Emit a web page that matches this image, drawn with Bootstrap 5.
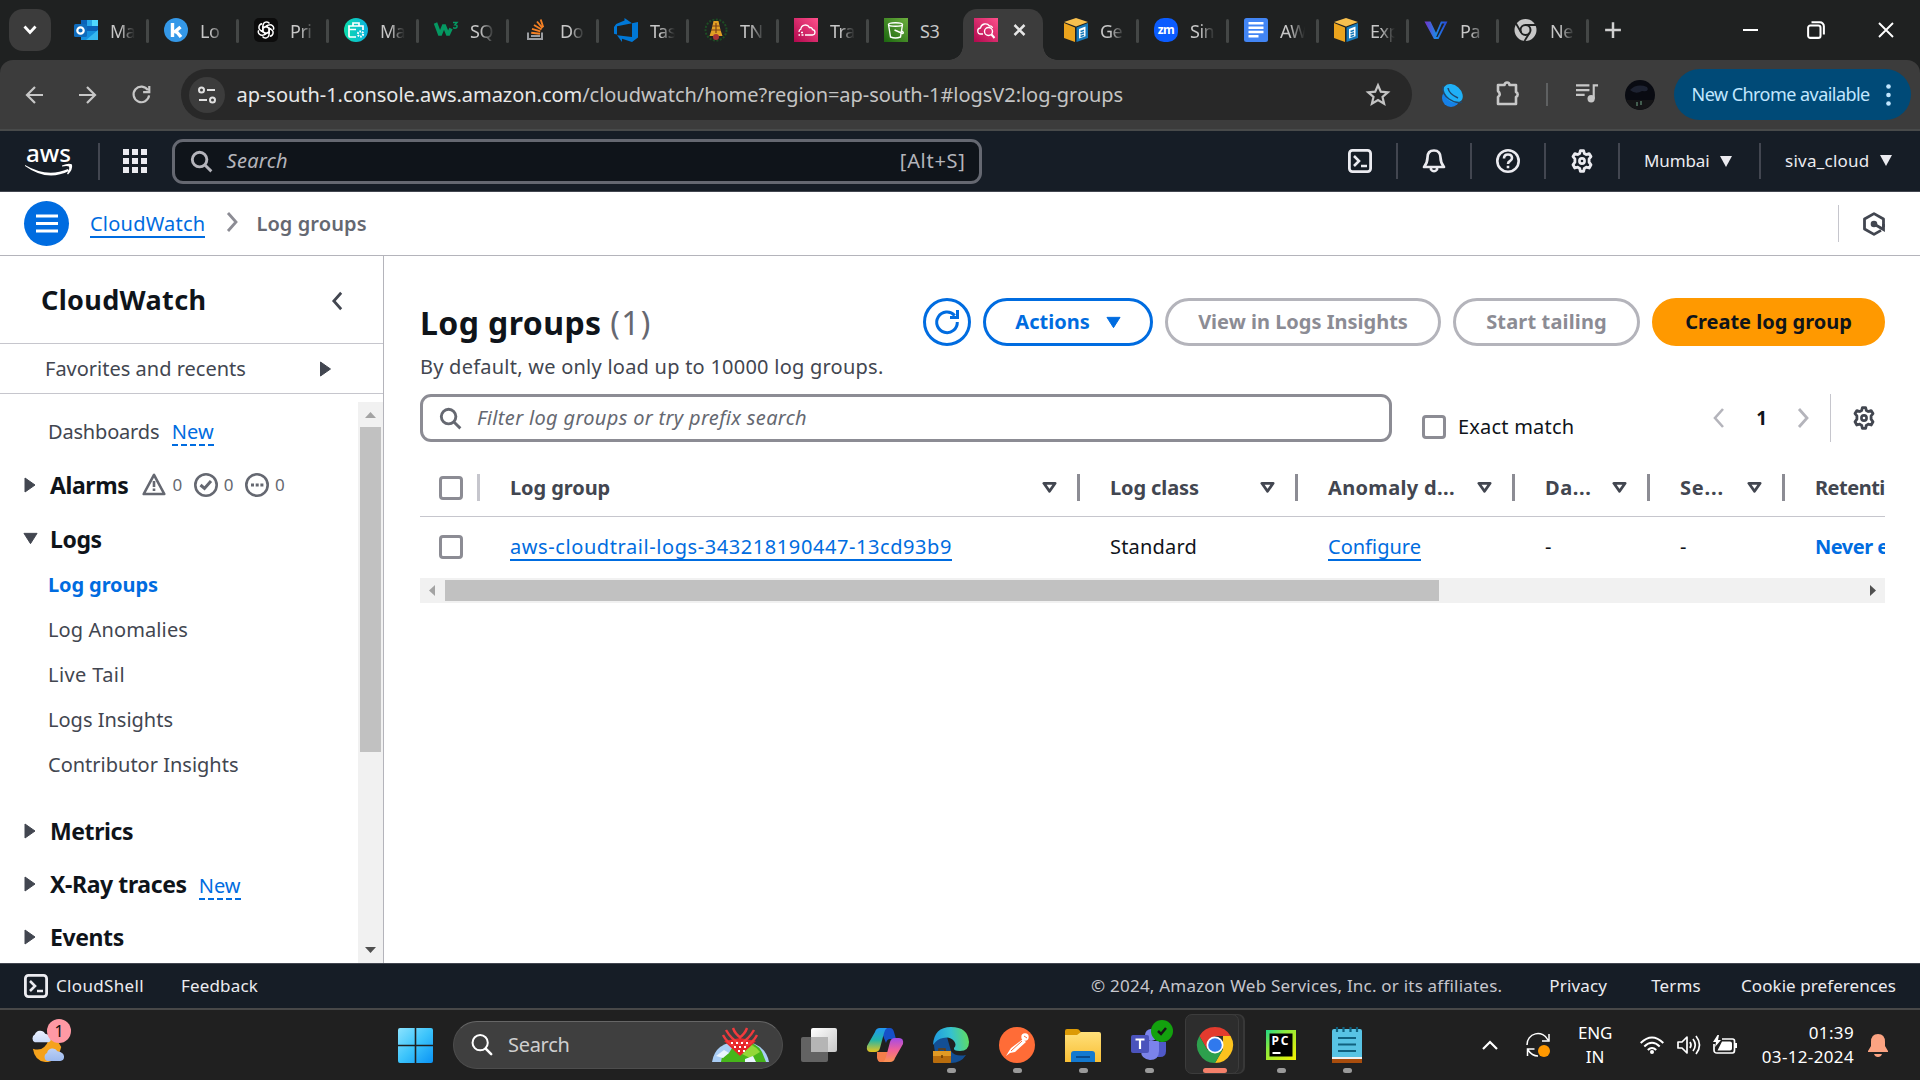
<!DOCTYPE html>
<html lang="en">
<head>
<meta charset="utf-8">
<title>Log groups - CloudWatch</title>
<link href="https://cdn.jsdelivr.net/npm/bootstrap@5.3.0/dist/css/bootstrap.min.css" rel="stylesheet">
<style>
:root{--blue:#006ce0;--ink:#0f141a;--soft:#424650;--rule:#b4b4bb;--edge:#8c8c94;--night:#161d26}
body{font-family:"Noto Sans","Open Sans",sans-serif;font-size:20px;color:var(--ink);width:1920px;height:1080px;overflow:hidden;line-height:1.4;background:#fff}
svg{display:block;flex:none;overflow:visible}
a{color:var(--blue)}
.ln{fill:none;stroke:currentColor}
.lk{text-decoration:none;border-bottom:2px solid var(--blue);line-height:25px;display:inline-block;padding-top:1px}
.newtag{color:var(--blue);border-bottom:2px dashed var(--blue);line-height:25px;padding-top:1px}
/* browser chrome */
.tabstrip{height:60px;background:#1f2121;color:#c7c7c7}
.tabmenu{width:42px;height:42px;border-radius:14px;background:#3c3c3c;margin:9px 6.5px 9px 9px}
.tab-cell{width:90px;height:60px;padding-left:16px;border:0;position:relative;font-size:18px;letter-spacing:-.5px}
.tab-cell:not(.on):not(.pre)::after{content:"";position:absolute;right:-1px;top:19px;width:3px;height:24px;border-radius:2px;background:#444746}
.tab-cell span{margin-left:12.500px;padding-top:3px;white-space:nowrap;-webkit-mask-image:linear-gradient(90deg,#000 10px,transparent 25px);mask-image:linear-gradient(90deg,#000 10px,transparent 25px)}
.tab-cell .whole{-webkit-mask-image:none;mask-image:none}
.tab-cell.on::before{content:"";position:absolute;left:5px;top:9px;width:80px;height:51px;background:#3c3c3c;border-radius:14px 14px 0 0}
.tab-cell.on svg{position:relative}
.flare{position:absolute;bottom:0;width:14px;height:14px}
.flare.l{left:-9px;background:radial-gradient(circle at 0 0,transparent 13.5px,#3c3c3c 14px)}
.flare.r{right:-9px;background:radial-gradient(circle at 100% 0,transparent 13.5px,#3c3c3c 14px)}
.toolbar-wrap{background:#1f2121}
.toolbar{height:71px;background:#3c3c3c;border-bottom:2px solid #484a4a;border-radius:13px 13px 0 0;color:#c7c7c7}
.navico{width:54px}
.omni{width:1231px;height:51px;border-radius:26px;background:#282828;margin-left:12px;padding:0 22px 0 8px;color:#c4c4c4;letter-spacing:-.04px}
.omni b{font-weight:400;color:#e8e8e8}
.site{width:36px;height:36px;border-radius:50%;background:#3c3c3c;margin-right:12px;color:#e0e0e0}
.exts{width:262px;padding-left:28px}
.upd{width:237px;height:51px;border-radius:26px;background:#004a77;color:#c2e7ff;font-size:18px;letter-spacing:-.54px;padding:0 20px 0 18px}
/* console header */
.aws-bar{height:61px;background:var(--night);border-bottom:1px solid #424650;color:#ebebf0;font-size:17px}
.vr-n{width:1.5px;height:37px;background:#424650;flex:none}
.aws-search{width:810px;height:45px;margin-left:25px;border:3px solid #656871;border-radius:11px;background:#0f141a;font-size:20px;color:#b4b4bb;padding:0 13px 0 15px}
.hcell{width:74px;border-right:2px solid #424650;height:36px}
.crumbs{height:64px;border-bottom:1.5px solid var(--rule)}
.burger{width:45px;height:45px;border-radius:50%;background:var(--blue);margin-left:24px}
.stage{height:707px}
/* side navigation */
.side{width:384px;border-right:1.5px solid var(--rule)}
.side-title{height:88px;border-bottom:1.5px solid #c6c6cd;padding:0 40px 0 41px;font-size:27px;font-weight:700;letter-spacing:.35px}
.fav{height:50px;border-bottom:1.5px solid #c6c6cd;color:var(--soft);padding:2px 51px 0 45px}
.tree{padding-top:16px}
.leaf{height:45px;padding-left:48px;color:var(--soft);display:flex;align-items:center}
.branch{height:53px;padding-left:24px;font-size:23px;font-weight:700;display:flex;align-items:center;letter-spacing:-.4px}
.branch .ar{width:14px;margin-right:12px}
.branch .newtag{font-weight:400}
.cnt{font-size:17px;font-weight:400;color:#656871;margin-left:6px;padding-top:1px}
.sbv{width:25px;background:#f1f1f1;margin-top:8px}
.sbv i{display:block;width:21px;height:325px;background:#c1c1c1}
/* content */
.work{padding:42px 35px 0 36px;width:1536px}
.btn-p{height:48px;border:3px solid var(--blue);border-radius:24px;color:var(--blue);font-weight:700;font-size:20px;padding:0;line-height:1;display:flex;align-items:center;justify-content:center}
.btn-p.off{border-color:var(--rule);color:var(--edge)}
.btn-p.main{background:#f90;border-color:#f90;color:var(--ink)}
.filt{width:972px;height:48px;border:3px solid var(--edge);border-radius:11px;padding-left:16px;font-style:italic;color:#656871;letter-spacing:.33px}
.cb{width:24px;height:24px;border:3px solid var(--edge);border-radius:4px;background:#fff;flex:none}
.gridbox{overflow:hidden;width:1465px}
.lg-table{width:1565px;table-layout:fixed;margin:0}
.lg-table th,.lg-table td{padding:0;vertical-align:middle;white-space:nowrap;border:0}
.lg-table thead tr{height:56px;border-bottom:1.5px solid #c6c6cd}
.lg-table tbody tr{height:62px}
.th-in{display:flex;align-items:center;justify-content:space-between;height:27px;padding:0 20px 0 30px;border-right:3px solid var(--edge);color:var(--soft);letter-spacing:.1px}
.lg-table td{padding-left:30px}
.lg-table .edgecol,.lg-table .edgecol .th-in{letter-spacing:-.5px}
.sbh{height:25px;background:#f1f1f1}
.sbh i{display:block;height:21px;width:994px;background:#c1c1c1}
/* footer and taskbar */
.foot{height:47px;background:var(--night);border-top:1.5px solid #424650;border-bottom:2px solid #484848;color:#ebebf0;font-size:17px;letter-spacing:.17px}
.taskbar{height:70px;background:#202020;color:#fff;font-size:17px}
.tb-search{width:330px;height:48px;border-radius:24px;background:#3f3f3f;border:1.5px solid #4d4d4d;border-top-color:#666;font-size:20px;color:#cfcfcf;letter-spacing:-.3px;padding:0 13px 0 17px;margin-left:20px}
.app{width:66px;height:70px;position:relative;display:flex;align-items:center;justify-content:center}
.app.run::after{content:"";position:absolute;bottom:7px;left:29px;width:9px;height:5px;border-radius:3px;background:#9a9a9a}
.app.act::before{content:"";position:absolute;left:3px;top:4px;width:54px;height:60px;border-radius:7px;background:#2d2d2d;border:1.5px solid #3c3c3c;box-shadow:5px 0 0 -1px #2a2a2a,6px 0 0 0 #383838}
.app.run.act::after{left:21px;width:24px;background:#f4806a}
.app svg{position:relative}
.wx{width:44px;margin-left:29px;position:relative}
.pip{position:absolute;left:18px;top:-9px;width:24px;height:24px;border-radius:50%;background:#ff99a4;color:#111;font-size:16px;line-height:24px;text-align:center}
</style>
<script src="https://cdn.jsdelivr.net/npm/bootstrap@5.3.0/dist/js/bootstrap.bundle.min.js"></script>
</head>
<body class="d-flex flex-column">
<svg width="0" height="0" class="position-absolute">
<defs>
<linearGradient id="pk" x1="0" y1="1" x2="1" y2="0"><stop stop-color="#b0084d"/><stop offset="1" stop-color="#ff4f8b"/></linearGradient>
<linearGradient id="gn" x1="0" y1="1" x2="1" y2="0"><stop stop-color="#1b660f"/><stop offset="1" stop-color="#6cae3e"/></linearGradient>
<linearGradient id="tq" x1="0" x2="1"><stop stop-color="#0bdcab"/><stop offset="1" stop-color="#0cb2e0"/></linearGradient>
<linearGradient id="vv" x1="0" x2="1"><stop stop-color="#6b3bd0"/><stop offset=".5" stop-color="#1e88e5"/><stop offset="1" stop-color="#2a4bd7"/></linearGradient>
<linearGradient id="wn" x1="0" y1="0" x2="1" y2="1"><stop stop-color="#8be3ff"/><stop offset=".5" stop-color="#3cc4fb"/><stop offset="1" stop-color="#0a93f5"/></linearGradient>
<linearGradient id="fo" x1="0" y1="0" x2="0" y2="1"><stop stop-color="#ffe07a"/><stop offset="1" stop-color="#f9bf35"/></linearGradient>
<linearGradient id="c1" x1="0" y1="0" x2="0" y2="1"><stop stop-color="#2196f3"/><stop offset=".5" stop-color="#22b5a8"/><stop offset="1" stop-color="#e8c41b"/></linearGradient>
<linearGradient id="c2" x1="0" y1="0" x2="0" y2="1"><stop stop-color="#a44be8"/><stop offset=".5" stop-color="#f0609a"/><stop offset="1" stop-color="#fb9350"/></linearGradient>
<linearGradient id="ed" x1="0" y1=".3" x2="1" y2=".2"><stop stop-color="#1f9be0"/><stop offset=".5" stop-color="#35c1d0"/><stop offset="1" stop-color="#62dd5c"/></linearGradient>
<linearGradient id="cl" x1="0" y1="0" x2="0" y2="1"><stop stop-color="#eaf1ff"/><stop offset="1" stop-color="#9cb9ee"/></linearGradient>
<linearGradient id="pc" x1="0" y1="0" x2="1" y2="1"><stop stop-color="#21d789"/><stop offset=".35" stop-color="#8bea3c"/><stop offset="1" stop-color="#f6f000"/></linearGradient>
<linearGradient id="tk" x1="0" y1="0" x2="1" y2="1"><stop stop-color="#fff"/><stop offset="1" stop-color="#c8c8c8"/></linearGradient>
<symbol id="gear" viewBox="0 0 24 24"><path class="ln" stroke-width="2.8" stroke-linejoin="round" d="M9.7 4.4 10.4 1.6h3.2l.7 2.8 2 1.1 2.8-.9 1.9 3-1.9 2.2v3.4L21 15.8l-1.800 3.200-2.900-.8-2 1.200-.7 3h-3.200l-.7-3-2-1.200-2.900.8L3 15.800l1.900-2.600V9.800L3 7.600l1.900-3 2.800.9z"/><circle class="ln" cx="12" cy="12" r="2.6" stroke-width="2.6"/></symbol>
<symbol id="shell" viewBox="0 0 24 24"><rect class="ln" x="1.4" y="1.4" width="21.2" height="21.2" rx="3" stroke-width="2.8"/><path class="ln" stroke-width="2.6" d="m6 7 5 5-5 5M13 17h6"/></symbol>
<symbol id="mag" viewBox="0 0 24 24"><circle class="ln" cx="10" cy="10" r="7.6" stroke-width="3"/><path class="ln" stroke-width="3" d="m15.3 15.3 7 7"/></symbol>
<symbol id="chev" viewBox="0 0 12 20"><path class="ln" stroke-width="2.8" d="m2 1 8 9-8 9"/></symbol>
<symbol id="right" viewBox="0 0 12 16"><path fill="currentColor" stroke="currentColor" stroke-linejoin="round" d="M1 1v14l10-7z"/></symbol>
<symbol id="down" viewBox="0 0 16 13"><path fill="currentColor" stroke="currentColor" stroke-linejoin="round" d="M1 1h14L8 12z"/></symbol>
<symbol id="sort" viewBox="0 0 16 13"><path class="ln" stroke-width="3" stroke-linejoin="round" d="M2 2h12L8 10.5z"/></symbol>
<symbol id="cube" viewBox="0 0 24 24"><path fill="#f8c04e" d="M12 0 24 4 12 8.500 0 4z"/><path fill="#eba41d" d="M0 5l11 4.500V24L0 20z"/><path fill="#1779ba" d="m12.500 9.500 11.500-4.500V20l-11.500 4z"/><path fill="#fff" d="m15 11 6.500-2.500v9.700L15 20.500z"/><path class="ln" style="stroke:#1779ba" stroke-width="1.500" d="m16.500 13.500 3.500-1.300M16.500 16l3.500-1.300M16.500 18.500l3.500-1.300"/></symbol>
</defs></svg>

<!-- tab strip -->
<div class="tabstrip d-flex align-items-center">
 <div class="tabmenu d-flex align-items-center justify-content-center text-white"><svg width="14" height="10" viewBox="0 0 14 10"><path class="ln" stroke-width="2.800" d="m1.500 1.500 5.500 6 5.500-6"/></svg></div>
 <div class="tab-cell d-flex align-items-center"><svg width="24" height="24" viewBox="0 0 24 24"><path fill="#0a62b8" d="M7 2h17v17H7z"/><path fill="#28a8ea" d="M13 2h11v6H13z"/><path fill="#50d9ff" d="M18 2h6v6h-6z"/><path fill="#1490df" d="M7 13h17v9H7z"/><path fill="#35b8f1" d="m24 12-12 10h12z"/><rect y="6" width="13" height="13" rx="1.500" fill="#0f6cbd"/><circle class="ln" style="stroke:#fff" cx="6.500" cy="12.500" r="3.200" stroke-width="2.200"/></svg><span>Ma</span></div>
 <div class="tab-cell d-flex align-items-center"><svg width="24" height="24" viewBox="0 0 24 24"><circle cx="12" cy="12" r="12" fill="#3498e8"/><path class="ln" style="stroke:#fff" stroke-width="3.400" d="M8.500 5v14M16.500 9l-6.500 5.500M11.500 12.500l5.500 6.500"/></svg><span>Lo</span></div>
 <div class="tab-cell d-flex align-items-center"><svg width="24" height="24" viewBox="0 0 24 24"><rect width="24" height="24" rx="5" fill="#0c0c0c"/><g class="ln" style="stroke:#fff" stroke-width="1.400"><path id="petal" d="M9 13.500V7.500a3.600 3.600 0 0 1 6.500-2M9 10l5-2.800"/><use href="#petal" transform="rotate(60 12 12)"/><use href="#petal" transform="rotate(120 12 12)"/><use href="#petal" transform="rotate(180 12 12)"/><use href="#petal" transform="rotate(240 12 12)"/><use href="#petal" transform="rotate(300 12 12)"/></g></svg><span>Pri</span></div>
 <div class="tab-cell d-flex align-items-center"><svg width="24" height="24" viewBox="0 0 24 24"><circle cx="12" cy="12" r="12" fill="url(#tq)"/><path class="ln" style="stroke:#fff" stroke-width="1.700" d="M12 19H6a1 1 0 0 1-1-1V8h14v4M9 8V5h6v3M5 11.500h7"/><circle class="ln" style="stroke:#fff" cx="16.500" cy="16" r="2.600" stroke-width="2" stroke-dasharray="1.700 1"/></svg><span>Ma</span></div>
 <div class="tab-cell d-flex align-items-center"><svg width="24" height="24" viewBox="0 0 24 24"><path class="ln" style="stroke:#059862" stroke-width="3.600" stroke-linejoin="bevel" d="m1.500 5 4.500 12 4-10 4 10 3-6.500"/><path class="ln" style="stroke:#059862" stroke-width="1.500" d="M19 4.500h4l-2 2.300q2.500 0 2 2t-4 1"/></svg><span>SQ</span></div>
 <div class="tab-cell d-flex align-items-center"><svg width="24" height="24" viewBox="0 0 24 24"><path class="ln" style="stroke:#9a9da1" stroke-width="2" d="M4 14.500V21h14v-6.500M7 18h9"/><path class="ln" style="stroke:#f48024" stroke-width="1.900" d="m7.200 14.700 8.800 1M8 10.800l8.300 2.600M10 7l7.500 4.500M13 3.500l5.500 6.700M16.700 1.500l2.500 7.700"/></svg><span>Do</span></div>
 <div class="tab-cell d-flex align-items-center"><svg width="24" height="24" viewBox="0 0 24 24"><path fill="#0078d7" d="M0 9 2.200 6 10.500 2.600V0L18 5.300 3 8.200v8.300L0 15.700zM24 4v15.500L18 24l-10-3.300V24l-5-6.700 15 1.800V5.300z"/></svg><span>Tas</span></div>
 <div class="tab-cell d-flex align-items-center"><svg width="24" height="24" viewBox="0 0 24 24"><circle class="ln" style="stroke:#1d4d24" cx="12" cy="12" r="10.500" stroke-width="2" stroke-dasharray="2 1.500"/><path fill="#e1a024" d="m9.500 3 5 0 2 9 2 6H5.500l2-6z"/><path stroke="#7c431a" stroke-width="1.200" d="M8 8h8M7 12h10M12 5v10"/><circle cx="12" cy="19" r="3" fill="#a83236"/></svg><span>TN</span></div>
 <div class="tab-cell d-flex align-items-center"><svg width="24" height="24" viewBox="0 0 24 24"><path fill="url(#pk)" d="M0 0h24v24H0z"/><path class="ln" style="stroke:#fff" stroke-width="1.300" d="M11 17h7a2.700 2.700 0 0 0 .5-5.400 2.300 2.300 0 0 0-3-2 4.600 4.600 0 0 0-8.700 1.600A3 3 0 0 0 5 14M4.500 17H6M7.500 17h2M7 14.500h2"/></svg><span>Tra</span></div>
 <div class="tab-cell pre d-flex align-items-center"><svg width="24" height="24" viewBox="0 0 24 24"><path fill="url(#gn)" d="M0 0h24v24H0z"/><ellipse class="ln" style="stroke:#fff" cx="11.500" cy="6.500" rx="7" ry="1.800" stroke-width="1.400"/><path class="ln" style="stroke:#fff" stroke-width="1.400" d="m4.500 6.500 2 12.500q5 2 10 0l2-12.500M10.500 12l8 3.500q2-.5-1-3"/></svg><span class="whole">S3</span></div>
 <div class="tab-cell on d-flex align-items-center"><i class="flare l"></i><i class="flare r"></i><svg width="24" height="24" viewBox="0 0 24 24"><path fill="url(#pk)" d="M0 0h24v24H0z"/><path class="ln" style="stroke:#fff" stroke-width="1.300" d="M9 16H7a3 3 0 0 1-.5-6 5 5 0 0 1 9-2 2.500 2.500 0 0 1 3 2"/><circle class="ln" style="stroke:#fff" cx="14.500" cy="13.500" r="4" stroke-width="1.400"/><path class="ln" style="stroke:#fff" stroke-width="2" d="m17.500 16.500 3 3.500"/></svg><svg class="ms-3" width="11" height="12" viewBox="0 0 11 12" style="color:#e6e6e6"><path class="ln" stroke-width="2.500" d="m.5 1 10 10m0-10-10 10"/></svg></div>
 <div class="tab-cell d-flex align-items-center"><svg width="24" height="24"><use href="#cube"/></svg><span>Ge</span></div>
 <div class="tab-cell d-flex align-items-center"><svg width="24" height="24" viewBox="0 0 24 24"><rect width="24" height="24" rx="10" fill="#0b5cff"/><text x="12" y="15.500" font-size="12" font-weight="700" fill="#fff" text-anchor="middle">zm</text></svg><span>Sin</span></div>
 <div class="tab-cell d-flex align-items-center"><svg width="24" height="24" viewBox="0 0 24 24"><rect width="24" height="24" rx="2.500" fill="#4285f4"/><path class="ln" style="stroke:#fff" stroke-width="2.400" d="M4.500 5.200h15M4.500 9.700h15M4.500 14h15M4.500 18.300h10"/></svg><span>AW</span></div>
 <div class="tab-cell d-flex align-items-center"><svg width="24" height="24"><use href="#cube"/></svg><span>Exp</span></div>
 <div class="tab-cell d-flex align-items-center"><svg width="24" height="24" viewBox="0 0 24 24"><path class="ln" style="stroke:url(#vv)" stroke-width="1.800" d="M2 4.500h4L12 17l5.500-12.500H22L14 20h-3.500zM4 5l7.500 14"/></svg><span>Pa</span></div>
 <div class="tab-cell d-flex align-items-center"><svg width="24" height="24" viewBox="0 0 24 24"><circle cx="11.500" cy="12" r="11" fill="#c7c7c7"/><circle class="ln" style="stroke:#1f2121" cx="11.500" cy="12" r="5" stroke-width="2"/><path class="ln" style="stroke:#1f2121" stroke-width="1.800" d="M11.500 7H22M7.200 14.500 2 5.500M15.800 14.500 10.500 23"/></svg><span>Ne</span></div>
 <svg style="color:#d0d0d0" class="ms-3" width="18" height="18" viewBox="0 0 16 16"><path class="ln" stroke-width="2.200" d="M8 1v14M1 8h14"/></svg>
 <div class="ms-auto d-flex align-items-center text-white" style="padding-right:22.500px">
  <svg width="15" height="14" viewBox="0 0 15 14"><path class="ln" stroke-width="2" d="M0 7h15"/></svg>
  <svg style="margin:0 48.500px 0 49.500px" width="18" height="18" viewBox="0 0 16 16"><rect class="ln" x="1" y="4" width="11" height="11" rx="2" stroke-width="1.800"/><path class="ln" stroke-width="1.800" d="M4 1.200h7.500a3.500 3.500 0 0 1 3.500 3.500V12"/></svg>
  <svg class="me-1 ms-1" width="16" height="16" viewBox="0 0 16 16"><path class="ln" stroke-width="1.900" d="m1 1 14 14m0-14L1 15"/></svg>
 </div>
</div>

<!-- address bar -->
<div class="toolbar-wrap"><div class="toolbar d-flex align-items-center">
 <div class="navico d-flex justify-content-center" style="margin-left:6.500px"><svg width="18" height="18" viewBox="0 0 18 18"><path class="ln" stroke-width="2.200" d="M18 9H2m8-8L2 9l8 8"/></svg></div>
 <div class="navico d-flex justify-content-center"><svg width="18" height="18" viewBox="0 0 18 18"><path class="ln" stroke-width="2.200" d="M0 9h16M8 1l8 8-8 8"/></svg></div>
 <div class="navico d-flex justify-content-center"><svg width="19" height="19" viewBox="0 0 20 20"><path class="ln" stroke-width="2.300" d="M16.800 5.500A8.200 8.200 0 1 0 18 11M18.200 1v6.500h-6.500"/></svg></div>
 <div class="omni d-flex align-items-center"><div class="site d-flex align-items-center justify-content-center"><svg width="18" height="18" viewBox="0 0 18 18"><circle class="ln" cx="3.500" cy="4" r="2.500" stroke-width="2"/><circle class="ln" cx="14.500" cy="14" r="2.500" stroke-width="2"/><path class="ln" stroke-width="2.200" d="M9 4h8M1 14h8"/></svg></div><div><b>ap-south-1.console.aws.amazon.com</b>/cloudwatch/home?region=ap-south-1#logsV2:log-groups</div>
 <svg class="ms-auto" width="24" height="23" viewBox="0 0 24 23"><path class="ln" stroke-width="2.200" d="m12 2.300 2.800 6.400 7 .6-5.300 4.600 1.600 6.800-6.100-3.600-6.100 3.600 1.600-6.800-5.300-4.600 7-.6z"/></svg></div>
 <div class="exts d-flex align-items-center">
  <svg width="24" height="24" viewBox="0 0 24 24"><ellipse cx="11" cy="15" rx="9" ry="9" fill="#1681e8"/><ellipse cx="13" cy="10.500" rx="11" ry="8" transform="rotate(42 13 10.500)" fill="#1fb0f7"/><path class="ln" style="stroke:#20476d" stroke-width="1.500" d="M3 3q-1 8 6 13t13 3M8 5q1 6 10 10"/></svg>
  <svg style="margin:-4px 0 0 31px" width="26" height="26" viewBox="0 0 26 26"><path class="ln" stroke-width="2.600" stroke-linejoin="round" d="M3 5h6.500a2.500 2.500 0 0 1 5 0H21v7a2.700 2.700 0 0 1 0 5v7H3v-7q3.500-2.500 0-6z"/></svg>
  <i style="margin-left:25px;width:2.500px;height:23px;background:#5f6162"></i>
  <svg style="margin:-3px 0 0 28px" width="23" height="20" viewBox="0 0 24 20"><path class="ln" stroke-width="2.200" d="M0 2h14M0 7h14M0 12h9M18.500 16V2H23"/><circle cx="15.800" cy="16" r="3.800" fill="currentColor"/></svg>
  <svg style="margin-left:26px" width="30" height="30" viewBox="0 0 30 30"><circle cx="15" cy="15" r="15" fill="#090b12"/><path fill="#272c3e" opacity=".7" d="M5 10q7-7 17-3 3 5-5 4-6 4-12-1z"/><path fill="#151517" d="M1 20h28q-4 9-14 10Q5 29 1 20z"/><path stroke="#537563" stroke-width="1.500" d="M12 22v4M16 21v4"/></svg>
 </div>
 <div class="upd d-flex align-items-center justify-content-between">New Chrome available<svg width="5" height="24" viewBox="0 0 5 24" fill="currentColor"><circle cx="2.500" cy="3.500" r="2.300"/><circle cx="2.500" cy="12" r="2.300"/><circle cx="2.500" cy="20.500" r="2.300"/></svg></div>
</div></div>

<!-- console header -->
<header class="aws-bar d-flex align-items-center">
 <svg style="margin-left:25px" width="48" height="30" viewBox="0 0 48 30"><text x="1" y="15.500" font-size="24" font-weight="500" fill="#fff" textLength="45" lengthAdjust="spacingAndGlyphs">aws</text><path fill="#fff" d="M0 19q22 13 43 4l1 2Q22 36 0 20zM37 19.500q7-3 10-1 1 5-4 10l-1-1q3-4 2-7-2-1-7 0z"/></svg>
 <span class="vr-n" style="margin-left:25px"></span>
 <svg style="margin-left:23px" width="24" height="24" viewBox="0 0 24 24" fill="currentColor"><path d="M0 0h6v6H0zM9 0h6v6H9zM18 0h6v6h-6zM0 9h6v6H0zM9 9h6v6H9zM18 9h6v6h-6zM0 18h6v6H0zM9 18h6v6H9zM18 18h6v6h-6z"/></svg>
 <div class="aws-search d-flex align-items-center"><svg width="23" height="23"><use href="#mag"/></svg><i style="margin-left:14px;letter-spacing:.3px">Search</i><span class="ms-auto" style="letter-spacing:.7px">[Alt+S]</span></div>
 <div class="d-flex align-items-center ms-auto">
  <div class="hcell d-flex align-items-center justify-content-center"><svg width="24" height="24"><use href="#shell"/></svg></div>
  <div class="hcell d-flex align-items-center justify-content-center"><svg width="24" height="24" viewBox="0 0 24 24"><path class="ln" stroke-width="2.700" stroke-linejoin="round" d="M12 1.500c-4.500 0-6.500 3-6.500 7 0 4-1 6.500-3.500 9.500h20c-2.500-3-3.500-5.500-3.500-9.500 0-4-2-7-6.500-7z"/><path class="ln" stroke-width="2.600" d="M9 19v1.500q3 3.500 6 0V19"/></svg></div>
  <div class="hcell d-flex align-items-center justify-content-center"><svg width="24" height="24" viewBox="0 0 24 24"><circle class="ln" cx="12" cy="12" r="10.700" stroke-width="2.600"/><path class="ln" stroke-width="2.600" d="M8 9.500q0-4 4-4t4 3.500q0 2-2 3t-2 3M12 16.700v2.600"/></svg></div>
  <div class="hcell d-flex align-items-center justify-content-center"><svg width="24" height="24"><use href="#gear"/></svg></div>
  <div class="d-flex align-items-center justify-content-between" style="width:141px;height:36px;border-right:2px solid #424650;padding:0 27px 0 24px;letter-spacing:-.1px">Mumbai<svg width="12" height="11" viewBox="0 0 12 11"><path fill="currentColor" d="M0 0h12L6 11z"/></svg></div>
  <div class="d-flex align-items-center justify-content-between" style="width:159px;padding:0 28px 0 24px;letter-spacing:.25px">siva_cloud<svg width="12" height="11" viewBox="0 0 12 11"><path fill="currentColor" d="M0 0h12L6 11z"/></svg></div>
 </div>
</header>

<!-- breadcrumb row -->
<nav class="crumbs d-flex align-items-center">
 <div class="burger d-flex align-items-center justify-content-center text-white"><svg width="22" height="19" viewBox="0 0 22 19"><path class="ln" stroke-width="3" d="M0 2h22M0 9.500h22M0 17h22"/></svg></div>
 <a class="lk" style="margin:1px 0 0 21px;letter-spacing:.22px" href="#">CloudWatch</a>
 <svg style="margin:-3px 0 0 21px;color:#8c8c94" width="12" height="20"><use href="#chev"/></svg>
 <span style="margin-left:18px;font-weight:600;color:#656871;letter-spacing:.1px">Log groups</span>
 <div class="ms-auto d-flex align-items-center" style="border-left:1.500px solid #c6c6cd;height:37px;padding:0 34px 0 23px;color:#424650"><svg width="24" height="24" viewBox="0 0 24 24"><path class="ln" stroke-width="2.800" stroke-linejoin="round" d="M21.500 15V7L12 1.600 2.500 7v10l9.500 5.400 7-4"/><circle cx="12" cy="12" r="3.300" fill="currentColor"/><path class="ln" stroke-width="2.800" d="m12 12 9.500 5.500V12"/></svg></div>
</nav>

<div class="stage d-flex">
 <aside class="side d-flex flex-column flex-shrink-0">
  <div class="side-title d-flex align-items-center justify-content-between">CloudWatch<svg class="mt-1" width="11" height="20" viewBox="0 0 12 20" style="color:#424650"><path class="ln" stroke-width="3" d="m10 1-8 9 8 9"/></svg></div>
  <div class="fav d-flex align-items-center justify-content-between">Favorites and recents<svg width="13" height="16"><use href="#right"/></svg></div>
  <div class="d-flex flex-fill overflow-hidden">
   <div class="tree flex-fill">
    <div class="leaf"><span style="letter-spacing:-.18px">Dashboards</span><span class="newtag" style="margin-left:12.500px">New</span></div>
    <div class="branch" style="height:60px"><span class="ar"><svg width="12" height="16" style="color:#424650"><use href="#right"/></svg></span>Alarms
     <svg style="margin-left:14px;color:#656871" width="24" height="23" viewBox="0 0 24 23"><path class="ln" stroke-width="2.600" stroke-linejoin="round" d="M12 1.800 1.700 21h20.600z"/><path class="ln" stroke-width="2.600" d="M12 8v6M12 15.500V18"/></svg><span class="cnt">0</span>
     <svg style="margin-left:12px;color:#656871" width="24" height="24" viewBox="0 0 24 24"><circle class="ln" cx="12" cy="12" r="10.700" stroke-width="2.600"/><path class="ln" stroke-width="3" d="m6.500 12 4 3.500 6.500-7.500"/></svg><span class="cnt">0</span>
     <svg style="margin-left:12px;color:#656871" width="24" height="24" viewBox="0 0 24 24"><circle class="ln" cx="12" cy="12" r="10.700" stroke-width="2.600"/><path class="ln" stroke-width="3" stroke-dasharray="3 1.700" d="M6 12h13"/></svg><span class="cnt">0</span></div>
    <div class="branch" style="height:48px"><span class="ar"><svg width="15" height="13" style="color:#424650;margin-left:-1px"><use href="#down"/></svg></span>Logs</div>
    <div class="leaf fw-bold" style="color:#006ce0;letter-spacing:-.1px">Log groups</div>
    <div class="leaf" style="letter-spacing:.12px">Log Anomalies</div>
    <div class="leaf" style="letter-spacing:.4px">Live Tail</div>
    <div class="leaf">Logs Insights</div>
    <div class="leaf" style="margin-bottom:17px">Contributor Insights</div>
    <div class="branch"><span class="ar"><svg width="12" height="16" style="color:#424650"><use href="#right"/></svg></span>Metrics</div>
    <div class="branch"><span class="ar"><svg width="12" height="16" style="color:#424650"><use href="#right"/></svg></span>X-Ray traces<span class="newtag" style="margin:3px 0 0 12px;font-size:20px;letter-spacing:0">New</span></div>
    <div class="branch"><span class="ar"><svg width="12" height="16" style="color:#424650"><use href="#right"/></svg></span>Events</div>
   </div>
   <div class="sbv d-flex flex-column align-items-center"><svg style="margin:10px 0 9px;color:#a3a3a3" width="11" height="6"><path fill="currentColor" d="M0 6h11L5.500 0z"/></svg><i></i><svg class="mt-auto" style="margin-bottom:10px;color:#505050" width="11" height="6"><path fill="currentColor" d="M0 0h11L5.500 6z"/></svg></div>
  </div>
 </aside>

 <main class="work">
  <div class="d-flex align-items-start justify-content-between">
   <h1 class="m-0" style="font-size:32px;font-weight:700;line-height:49px;letter-spacing:.42px">Log groups <span class="fw-normal" style="color:#656871;letter-spacing:1.200px">(1)</span></h1>
   <div class="d-flex" style="gap:12px">
    <button class="btn btn-p" style="width:48px"><svg width="24" height="24" viewBox="0 0 24 24"><path class="ln" stroke-width="3" d="M19.700 5.500A10.300 10.300 0 1 0 22.300 12M22.500 0v7.500H15"/></svg></button>
    <button class="btn btn-p" style="width:170px">Actions<svg style="margin-left:16px" width="15" height="13"><use href="#down"/></svg></button>
    <button class="btn btn-p off" style="width:276px">View in Logs Insights</button>
    <button class="btn btn-p off" style="width:187px;letter-spacing:.15px">Start tailing</button>
    <button class="btn btn-p main" style="width:233px">Create log group</button>
   </div>
  </div>
  <div style="color:#424650;letter-spacing:.24px;line-height:28px;margin-top:5.500px">By default, we only load up to 10000 log groups.</div>
  <div class="d-flex align-items-center" style="margin-top:13.500px">
   <div class="filt d-flex align-items-center"><svg width="23" height="23" style="margin-right:15px"><use href="#mag"/></svg>Filter log groups or try prefix search</div>
   <div class="d-flex align-items-center" style="margin-left:30px;padding-top:18px"><span class="cb"></span><span style="margin-left:12px;letter-spacing:.2px">Exact match</span></div>
   <div class="ms-auto d-flex align-items-center">
    <svg width="12" height="20" viewBox="0 0 12 20" style="color:#b4b4bb"><path class="ln" stroke-width="2.600" d="m10 1-8 9 8 9"/></svg>
    <b style="margin:0 30px 0 31px;font-size:19px">1</b>
    <svg width="12" height="20" style="color:#b4b4bb"><use href="#chev"/></svg>
    <div class="d-flex align-items-center" style="height:48px;border-left:1.500px solid #c6c6cd;margin-left:21px;padding:0 9px 0 21px;color:#424650"><svg width="24" height="24"><use href="#gear"/></svg></div>
   </div>
  </div>
  <div class="gridbox" style="margin-top:18px">
   <table class="lg-table">
    <colgroup><col style="width:60px"><col style="width:600px"><col style="width:218px"><col style="width:217px"><col style="width:135px"><col style="width:135px"><col style="width:200px"></colgroup>
    <thead><tr>
     <th><div class="th-in" style="padding:0 0 0 19px;border-color:#c6c6cd"><span class="cb"></span></div></th>
     <th><div class="th-in" style="letter-spacing:-.08px">Log group<svg width="15" height="13"><use href="#sort"/></svg></div></th>
     <th><div class="th-in" style="letter-spacing:-.1px">Log class<svg width="15" height="13"><use href="#sort"/></svg></div></th>
     <th><div class="th-in" style="letter-spacing:.34px">Anomaly d...<svg width="15" height="13"><use href="#sort"/></svg></div></th>
     <th><div class="th-in" style="letter-spacing:.6px">Da...<svg width="15" height="13"><use href="#sort"/></svg></div></th>
     <th><div class="th-in" style="letter-spacing:.8px">Se...<svg width="15" height="13"><use href="#sort"/></svg></div></th>
     <th class="edgecol"><div class="th-in">Retention</div></th>
    </tr></thead>
    <tbody><tr>
     <td style="padding-left:19px"><span class="cb d-block"></span></td>
     <td><a class="lk" style="letter-spacing:.58px" href="#">aws-cloudtrail-logs-343218190447-13cd93b9</a></td>
     <td style="letter-spacing:.2px">Standard</td>
     <td><a class="lk" href="#">Configure</a></td>
     <td>-</td><td>-</td>
     <td class="edgecol"><a class="fw-bold text-decoration-none" href="#">Never expire</a></td>
    </tr></tbody>
   </table>
   <div class="sbh d-flex align-items-center"><svg style="margin:0 10px 0 9px;color:#a3a3a3" width="6" height="11"><path fill="currentColor" d="M6 0v11L0 5.500z"/></svg><i></i><svg class="ms-auto" style="margin-right:9px;color:#505050" width="6" height="11"><path fill="currentColor" d="M0 0v11l6-5.500z"/></svg></div>
  </div>
 </main>
</div>

<!-- console footer -->
<footer class="foot d-flex align-items-center">
 <svg style="margin-left:24px" width="24" height="24"><use href="#shell"/></svg>
 <span style="margin-left:8px;letter-spacing:.34px">CloudShell</span><span style="margin-left:37px">Feedback</span>
 <span class="ms-auto" style="color:#c6c6cd;letter-spacing:.21px">© 2024, Amazon Web Services, Inc. or its affiliates.</span>
 <span style="margin-left:47px">Privacy</span><span style="margin-left:44px">Terms</span><span style="margin:0 24px 0 40px;letter-spacing:.08px">Cookie preferences</span>
</footer>

<!-- desktop taskbar -->
<div class="taskbar d-flex align-items-center">
 <div class="wx"><svg width="38" height="34" viewBox="0 0 38 36"><path fill="#f5a21c" d="M3 22q12 4 17-10 10 0 13 8-4 16-17 16Q5 35 3 22z"/><path fill="url(#cl)" d="M5 15a4.500 4.500 0 0 1 0-8 6 6 0 0 1 11-1q6 1 6 5 0 4-3 4zM19 35a4.500 4.500 0 0 1-1-8.500 6 6 0 0 1 11-2q7 1 7 6 0 4-4 4.500z"/></svg><span class="pip">1</span></div>
 <svg style="margin-left:325px" width="35" height="35" viewBox="0 0 35 35"><path fill="url(#wn)" d="M2 0h14.700v16.700H0V2q0-2 2-2zM18.300 0H33q2 0 2 2v14.700H18.300zM0 18.300h16.700V35H2q-2 0-2-2zM18.300 18.300H35V33q0 2-2 2H18.300z"/></svg>
 <div class="tb-search d-flex align-items-center"><svg width="22" height="22" viewBox="0 0 24 24" class="text-white"><circle class="ln" cx="10" cy="9.500" r="8.300" stroke-width="2.200"/><path class="ln" stroke-width="2.800" stroke-linecap="round" d="m16 16 6 6"/></svg><span style="margin-left:15px">Search</span>
  <svg class="ms-auto" width="57" height="34" viewBox="0 0 57 34"><path fill="#a9cdf5" d="M0 34q3-20 28-21 25 1 29 21z"/><path fill="#46b51a" d="M9 34q0-8 8-9l6-10q20-4 27 9l4 10z"/><path fill="#93d838" d="M28 15q14 0 20 9l-10 6-8-4z"/><path fill="#e9f4ff" d="M4 28l8-6 5 3-6 5zM33 31l8-3 3 6H33z"/><path fill="#e42529" d="m12 13 16 15 16-15-16-3z"/><path class="ln" style="stroke:#f23a3d" stroke-width="2.400" d="M11 7q4 8 12 11M14 2q5 9 14 14M21 0q2 6 8 10M45 7q-4 8-12 11M42 2q-5 9-14 14M35 0q-2 6-8 10"/><path class="ln" style="stroke:#fff" stroke-width="1.800" stroke-dasharray="2 3" d="M19 15h20M22 19h14M26 23h7"/></svg></div>
 <div class="d-flex" style="margin-left:3px">
  <div class="app"><svg width="36" height="34" viewBox="0 0 36 34"><rect x="10" width="26" height="24" rx="2" fill="url(#tk)"/><rect y="9" width="27" height="25" rx="2" fill="#707070" opacity=".85"/><path fill="#b5b5b5" d="M10 9h17v15H10z"/></svg></div>
  <div class="app"><svg width="36" height="34" viewBox="0 0 36 34"><path fill="#1650c8" d="M13 0h10q3 0 4 4l2 7h-6q-3 0-4 4z"/><path fill="url(#c1)" d="M8 4q1-4 5-4h7q-2 1-3 5l-4 15q-1 4-5 4H4q-5 0-4-6z"/><path fill="#f47e4b" d="M10 24h12l4-7-4 13q-1 4-5 4h-4q-2 0-3-4z"/><path fill="url(#c2)" d="M28 30q-1 4-5 4h-7q2-1 3-5l4-15q1-4 5-4h4q5 0 4 6z"/></svg></div>
  <div class="app run"><svg width="36" height="36" viewBox="0 0 36 36"><path fill="#134f94" d="M1 15q3-5 13-5l4 14q4 6 15 4-5 8-15 8Q0 34 1 15z"/><path fill="url(#ed)" d="M0 18Q1 0 18 0t18 15q0 9-9 9-7 0-6-3 3-3 0-7-4-5-11-3-6 1-10 7z"/><rect y="24" width="18" height="12" rx="1" fill="#b96d0d"/><path fill="#e19a24" d="M0 24h18v5H0z"/><path class="ln" style="stroke:#693b04" stroke-width="1.500" d="M6 24v-2h6v2M9 28v3"/></svg></div>
  <div class="app run"><svg width="36" height="36" viewBox="0 0 36 36"><circle cx="18" cy="18" r="18" fill="#ff6c37"/><circle cx="26" cy="10" r="3.700" fill="#fff"/><path fill="#fff" d="m24 12 3 3-11 10-5 1-4 3 3-5 2-3z"/><path stroke="#ff6c37" d="m12 24 11-10M25 9l3 2"/></svg></div>
  <div class="app run"><svg width="36" height="33" viewBox="0 0 36 33"><path fill="#dc9a05" d="M0 2q0-2 2-2h10q2 0 3 2l2 3v7H0z"/><path fill="url(#fo)" d="M0 6h12l4-3h18q2 0 2 2v28H0z"/><path fill="#1379d0" d="M6 33V25q0-3 3-3h18q3 0 3 3v8z"/><path class="ln" style="stroke:#0a4b8c" stroke-width="2" d="M11 28h14"/></svg></div>
  <div class="app run"><svg width="42" height="40" viewBox="0 0 42 40" style="top:-5px;left:3px"><path fill="#5059c9" d="M24 22h11v9q0 6-6 6h-5z"/><path fill="#7b83eb" d="M10 21h18v10q0 9-9 9-9-1-9-9z"/><circle cx="20" cy="15" r="6" fill="#7b83eb"/><rect y="15" width="18" height="18" rx="2" fill="#4b53bc"/><path class="ln" style="stroke:#fff" stroke-width="2.200" d="M4.500 19.500h9M9 19.500V29"/><circle cx="31" cy="11" r="11" fill="#13a10e"/><path class="ln" style="stroke:#161616" stroke-width="2.500" d="m27 11 3 3 5-6"/></svg></div>
  <div class="app run act"><svg width="36" height="36" viewBox="0 0 36 36"><path fill="#e33b2e" d="M2.400 9A18 18 0 0 1 33.600 9H18l-7.800 13.500z"/><path fill="#fcc31e" d="M33.600 9A18 18 0 0 1 18 36l7.800-13.500L26 9z"/><path fill="#2da04d" d="M18 36A18 18 0 0 1 2.400 9l7.800 13.500 15.600 0z"/><circle cx="18" cy="18" r="8.500" fill="#fff"/><circle cx="18" cy="18" r="6.800" fill="#3079ed"/></svg></div>
  <div class="app run"><svg width="30" height="30" viewBox="0 0 30 30"><path fill="url(#pc)" d="M0 0h30v30H0z"/><path fill="#000" d="M3.500 3.500h23v23h-23z"/><text x="5.500" y="15" font-size="12" font-weight="700" fill="#fff" textLength="17">PC</text><path fill="#fff" d="M6.500 22h8v2h-8z"/></svg></div>
  <div class="app run"><svg width="30" height="36" viewBox="0 0 30 36"><path fill="#a94d0d" d="M0 31h30v5H0z"/><path fill="#f1f1f1" d="M0 27h30v5H0z"/><path fill="#58c3e4" d="M0 4q0-2 2-2h26q2 0 2 2v26H0z"/><path class="ln" style="stroke:#10617f" stroke-width="2.200" d="M5 0v5M11.500 0v5M18.500 0v5M25 0v5M6 11h18M6 17.500h18M6 24h18"/></svg></div>
 </div>
 <div class="d-flex align-items-center ms-auto" style="line-height:24px">
  <div class="d-flex justify-content-center" style="width:48px"><svg width="16" height="9" viewBox="0 0 16 9"><path class="ln" stroke-width="2.200" d="m1 8 7-7 7 7"/></svg></div>
  <div class="d-flex justify-content-center" style="width:48px"><svg width="24" height="24" viewBox="0 0 24 24"><path class="ln" stroke-width="1.500" d="M1 12A11 11 0 0 1 22 7M23 1v7h-7M12 23q-6 0-10-6M1.500 23v-7h7"/><circle cx="18" cy="18" r="6" fill="#ff9800"/></svg></div>
  <div class="text-center" style="width:66px;letter-spacing:-.2px">ENG<br>IN</div>
  <div class="d-flex justify-content-center" style="width:38px;margin-left:5px"><svg width="24" height="18" viewBox="0 0 24 18"><path class="ln" stroke-width="2" d="M.7 7q11.300-11 22.600 0M4.300 10.500q7.700-7.500 15.400 0M7.800 14q4.200-4 8.400 0"/><circle cx="12" cy="16" r="2" fill="#fff"/></svg></div>
  <div class="d-flex justify-content-center" style="width:36px"><svg width="24" height="20" viewBox="0 0 24 20"><path class="ln" stroke-width="1.700" stroke-linejoin="round" d="M1 7v6h4l5 5V2L5 7zM13 7q2 3 0 6M16 4q4.500 6 0 12M19 1q7 9 0 18"/></svg></div>
  <div class="d-flex justify-content-center" style="width:36px"><svg width="24" height="20" viewBox="0 0 24 20"><path class="ln" stroke-width="1.700" d="M9 4h10.500q2 0 2 2v9q0 3-2 3H4q-3 0-3-3V9"/><path fill="#fff" d="M22 8h2v5h-2zM9 6.500h8q2 0 2 2v5q0 2-2 2H4.500z"/><path fill="#fff" d="M4.500 0 0 7h3l-1 5 6-7H5l1-5z"/></svg></div>
  <div class="text-end" style="width:111px;letter-spacing:.35px">01:39<br>03-12-2024</div>
  <div class="d-flex justify-content-center" style="width:36px;margin:0 24px 0 6px"><svg width="20" height="23" viewBox="0 0 20 23" fill="#fba382"><path d="M10 0q7 0 7 8v4l3 5v1H0v-1l3-5V8q0-8 7-8zM6 20h8q-1 3-4 3t-4-3z"/></svg></div>
 </div>
</div>
</body>
</html>
